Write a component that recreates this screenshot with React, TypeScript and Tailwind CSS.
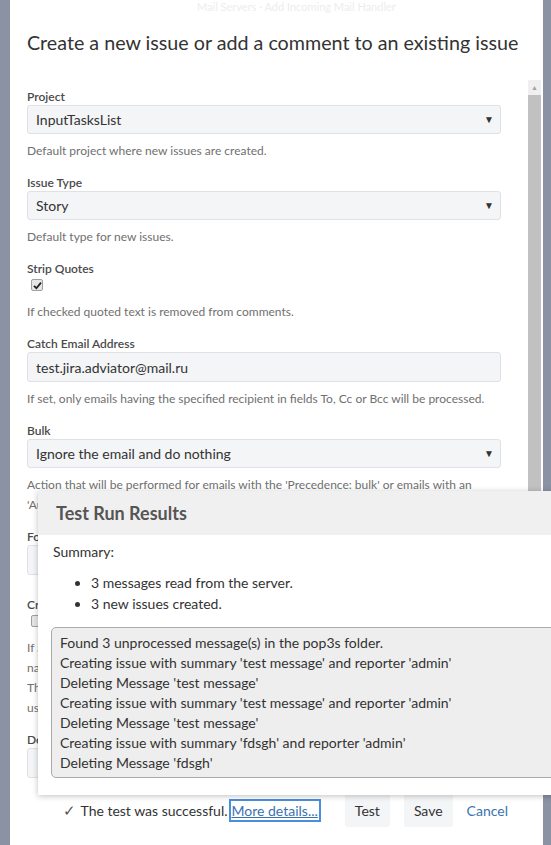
import type { ReactNode } from 'react';

/**
 * Incoming mail handler dialog with the "Test Run Results" popup open
 */

type FieldProps = {
  label: string;
  children: ReactNode;
  help?: string[];
  className?: string;
};

function Field({ label, children, help, className = 'mb-[14px]' }: FieldProps): JSX.Element {
  return (
    <div className={className}>
      <div className="text-[12px] leading-4 font-semibold text-[#4a4a4a]">{label}</div>
      {children}
      {help && (
        <div className="mt-[7px] text-[12px] leading-5 text-[#707070]">
          {help.map((line) => (
            <div key={line} className="whitespace-nowrap">
              {line}
            </div>
          ))}
        </div>
      )}
    </div>
  );
}

function SelectBox({ value }: { value: string }): JSX.Element {
  return (
    <div className="flex h-[29px] items-center justify-between rounded-[3px] border border-[#dfe1e6] bg-[#f4f5f7] pl-[8px] pr-[6px] text-[14px] text-[#333]">
      <span>{value}</span>
      <span className="text-[10px] text-[#333]">▼</span>
    </div>
  );
}

function TextBox({ value }: { value: string }): JSX.Element {
  return (
    <div className="flex h-[30px] items-center rounded-[3px] border border-[#dfe1e6] bg-[#f4f5f7] pl-[8px] text-[14px] text-[#333]">
      {value}
    </div>
  );
}

function CheckBox({ checked }: { checked: boolean }): JSX.Element {
  return (
    <div className="flex h-[18px] items-start pl-[4px] pt-[2px]">
      <span className="flex h-[12px] w-[12px] items-center justify-center rounded-[2px] border border-[#a0a0a0] bg-[#e6e6e6]">
        {checked && (
          <svg width="9" height="9" viewBox="0 0 9 9">
            <path d="M1 4.8 L3.4 7.2 L8 1.6" fill="none" stroke="#222" strokeWidth="1.8" />
          </svg>
        )}
      </span>
    </div>
  );
}

const logLines = [
  'Found 3 unprocessed message(s) in the pop3s folder.',
  "Creating issue with summary 'test message' and reporter 'admin'",
  "Deleting Message 'test message'",
  "Creating issue with summary 'test message' and reporter 'admin'",
  "Deleting Message 'test message'",
  "Creating issue with summary 'fdsgh' and reporter 'admin'",
  "Deleting Message 'fdsgh'",
];

export default function App(): JSX.Element {
  return (
    <div className="relative h-[845px] w-[551px] overflow-hidden bg-[#8a92a4] font-[Lato,sans-serif]">
      <div className="ml-[10px] flex h-full w-[533px] flex-col bg-white">
        {/* Header */}
        <div className="h-[80px] shrink-0">
          <div className="h-[14px] pl-[187px] text-[11px] leading-[14px] text-[#ededed]">
            Mail Servers · Add Incoming Mail Handler
          </div>
          <h1 className="mt-[15px] pl-[17px] text-[19.7px] leading-[28px] text-[#333]">
            Create a new issue or add a comment to an existing issue
          </h1>
        </div>

        {/* Scrolling form */}
        <div className="flex min-h-0 flex-1 overflow-hidden">
          <div className="w-[474px] shrink-0 ml-[17px] pt-[9px]">
            <Field label="Project" help={['Default project where new issues are created.']}>
              <SelectBox value="InputTasksList" />
            </Field>
            <Field label="Issue Type" help={['Default type for new issues.']}>
              <SelectBox value="Story" />
            </Field>
            <Field label="Strip Quotes" help={['If checked quoted text is removed from comments.']}>
              <CheckBox checked />
            </Field>
            <Field
              label="Catch Email Address"
              help={['If set, only emails having the specified recipient in fields To, Cc or Bcc will be processed.']}
            >
              <TextBox value="test.jira.adviator@mail.ru" />
            </Field>
            <Field
              label="Bulk"
              help={["Action that will be performed for emails with the 'Precedence: bulk' or emails with an"]}
              className=""
            >
              <SelectBox value="Ignore the email and do nothing" />
            </Field>

            {/* Part of the form hidden behind the results popup */}
            <div className="w-[11px] overflow-hidden">
              <div className="w-[474px]">
                <div className="mb-[14px] text-[12px] leading-5 whitespace-nowrap text-[#707070]">
                  'Auto-Submitted' header that is not set to "no".
                </div>
                <Field label="Forward Email" className="mb-[22px]">
                  <TextBox value="" />
                </Field>
                <Field
                  label="Create Users"
                  help={[
                    'If a message comes from an unrecognised address, create a new JIRA user with the user',
                    "name and email address set to the 'From' address of the message.",
                    'The password for the new user is randomly generated, and an email is sent to the new',
                    'user informing them about their new account.',
                  ]}
                >
                  <CheckBox checked={false} />
                </Field>
                <Field label="Default Reporter">
                  <TextBox value="" />
                </Field>
              </div>
            </div>
          </div>
          <div className="ml-[27px] flex w-[13px] flex-col bg-[#f0f0f0]">
            <div className="flex h-[15px] items-center justify-center text-[7px] text-[#a3a3a3]">▲</div>
            <div className="h-[640px] bg-[#c1c1c1]" />
          </div>
        </div>

        {/* Footer */}
        <div className="flex h-[55px] shrink-0 items-start justify-end pr-[35px] pt-[3px] text-[14px]">
          <div className="flex h-[34px] items-center">
            <span className="mr-[4px] text-[15px] text-[#555]">✓</span>
            <span className="text-[#333]">The test was successful.</span>
            <span className="ml-[1px] border-2 border-[#4a8fdb] px-[1px] leading-[19px] text-[#3b73af] underline">
              More details...
            </span>
          </div>
          <button className="ml-[24px] h-[34px] rounded-[3px] bg-[#f4f5f7] px-[10px] text-[#333]">Test</button>
          <button className="ml-[14px] h-[34px] rounded-[3px] bg-[#f4f5f7] px-[10px] text-[#333]">Save</button>
          <button className="ml-[14px] h-[34px] text-[#3b73af]">Cancel</button>
        </div>
      </div>

      {/* Test Run Results popup */}
      <div className="absolute left-[38px] top-[491px] w-[560px] bg-white shadow-[0_1px_6px_rgba(0,0,0,0.25)]">
        <div className="flex h-[44px] items-center bg-[#f0f0f0] pl-[18px]">
          <h2 className="text-[18px] font-bold text-[#555]">Test Run Results</h2>
        </div>
        <div className="pl-[15px] pt-[7px] pb-[17px] text-[14px] text-[#333]">
          <div className="leading-5">Summary:</div>
          <ul className="mt-[10px] list-disc pl-[38px] leading-[21px]">
            <li>3 messages read from the server.</li>
            <li>3 new issues created.</li>
          </ul>
          <div className="ml-[-2px] mt-[13px] rounded-[5px] border border-[#aaa] bg-[#eee] pb-[4px] pl-[8px] pt-[5px]">
            {logLines.map((line, i) => (
              <div key={i} className="leading-5 whitespace-nowrap">
                {line}
              </div>
            ))}
          </div>
        </div>
      </div>
    </div>
  );
}
